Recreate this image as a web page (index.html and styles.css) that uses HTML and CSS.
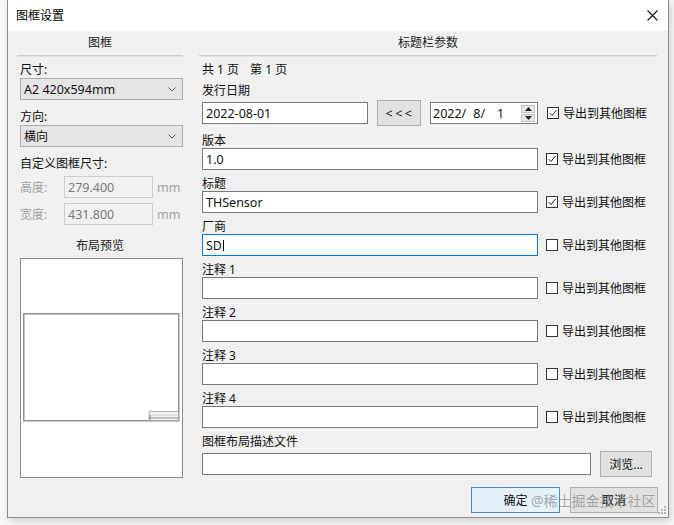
FILE: index.html
```html
<!DOCTYPE html>
<html lang="zh-CN">
<head>
<meta charset="utf-8">
<title>图框设置</title>
<link rel="stylesheet" href="styles.css">
</head>
<body>
<div class="window">
  <div class="titlebar">
    <span class="title">图框设置</span>
    <svg class="close" width="11" height="11" viewBox="0 0 11 11"><path d="M0.5 0.5L10.5 10.5M10.5 0.5L0.5 10.5" stroke="#111" stroke-width="1.1" fill="none"/></svg>
  </div>
  <div class="content">
    <div class="col-left">
      <div class="group-head">图框</div>
      <div class="lbl first">尺寸:</div>
      <div class="combo">
        <span class="latin">A2 420x594mm</span>
        <svg class="chev" width="8" height="5" viewBox="0 0 8 5"><path d="M0.5 0.5L4 4L7.5 0.5" stroke="#606060" fill="none"/></svg>
      </div>
      <div class="lbl gap11">方向:</div>
      <div class="combo">
        <span>横向</span>
        <svg class="chev" width="8" height="5" viewBox="0 0 8 5"><path d="M0.5 0.5L4 4L7.5 0.5" stroke="#606060" fill="none"/></svg>
      </div>
      <div class="lbl gap11">自定义图框尺寸:</div>
      <div class="dim-row">
        <span class="dim-lbl">高度:</span>
        <span class="dis-input latin">279.400</span>
        <span class="unit latin">mm</span>
      </div>
      <div class="dim-row">
        <span class="dim-lbl">宽度:</span>
        <span class="dis-input latin">431.800</span>
        <span class="unit latin">mm</span>
      </div>
      <div class="preview-title">布局预览</div>
      <div class="preview">
        <svg width="161" height="218" viewBox="0 0 161 218">
          <rect x="2.75" y="54.75" width="155" height="107" fill="#fff" stroke="#8f8f8f" stroke-width="1.5"/>
          <rect x="128" y="152.5" width="29.5" height="9" fill="#f2f2f2" stroke="#a0a0a0" stroke-width="0.8"/>
          <line x1="128" y1="156" x2="157.5" y2="156" stroke="#c8c8c8" stroke-width="0.8"/>
          <line x1="128" y1="159" x2="157.5" y2="159" stroke="#8c8c8c" stroke-width="1"/>
          <line x1="129" y1="156" x2="129" y2="161" stroke="#8c8c8c" stroke-width="1"/>
        </svg>
      </div>
    </div>
    <div class="col-right">
      <div class="group-head">标题栏参数</div>
      <div class="lbl first">共 1 页<span class="pg2">第 1 页</span></div>
      <div class="lbl gap8">发行日期</div>
      <div class="row tall">
        <div class="input date-input"><span class="latin">2022-08-01</span></div>
        <div class="btn btn-back"><span class="latin">&lt;&lt;&lt;</span></div>
        <div class="input spin">
          <span class="latin">2022/</span><span class="latin d2">8/</span><span class="latin d3">1</span>
          <span class="spin-btns">
            <span class="sb"><svg width="7" height="4" viewBox="0 0 7 4"><path d="M3.5 0L7 4H0Z" fill="#222"/></svg></span>
            <span class="sb"><svg width="7" height="4" viewBox="0 0 7 4"><path d="M0 0H7L3.5 4Z" fill="#222"/></svg></span>
          </span>
        </div>
        <span class="check on"><svg width="10" height="10" viewBox="0 0 10 10"><path d="M1.5 5L4 7.5L8.5 2" stroke="#222" stroke-width="1" fill="none"/></svg></span>
        <span class="check-lbl">导出到其他图框</span>
      </div>

      <div class="lbl gap9">版本</div>
      <div class="row">
        <div class="input wide"><span class="latin">1.0</span></div>
        <span class="check on"><svg width="10" height="10" viewBox="0 0 10 10"><path d="M1.5 5L4 7.5L8.5 2" stroke="#222" stroke-width="1" fill="none"/></svg></span>
        <span class="check-lbl">导出到其他图框</span>
      </div>

      <div class="lbl gap8">标题</div>
      <div class="row">
        <div class="input wide"><span class="latin">THSensor</span></div>
        <span class="check on"><svg width="10" height="10" viewBox="0 0 10 10"><path d="M1.5 5L4 7.5L8.5 2" stroke="#222" stroke-width="1" fill="none"/></svg></span>
        <span class="check-lbl">导出到其他图框</span>
      </div>

      <div class="lbl gap8">厂商</div>
      <div class="row">
        <div class="input wide focus"><span class="latin">SD</span><span class="caret"></span></div>
        <span class="check"></span>
        <span class="check-lbl">导出到其他图框</span>
      </div>

      <div class="lbl gap8">注释 1</div>
      <div class="row">
        <div class="input wide"></div>
        <span class="check"></span>
        <span class="check-lbl">导出到其他图框</span>
      </div>

      <div class="lbl gap8">注释 2</div>
      <div class="row">
        <div class="input wide"></div>
        <span class="check"></span>
        <span class="check-lbl">导出到其他图框</span>
      </div>

      <div class="lbl gap8">注释 3</div>
      <div class="row">
        <div class="input wide"></div>
        <span class="check"></span>
        <span class="check-lbl">导出到其他图框</span>
      </div>

      <div class="lbl gap8">注释 4</div>
      <div class="row">
        <div class="input wide"></div>
        <span class="check"></span>
        <span class="check-lbl">导出到其他图框</span>
      </div>

      <div class="lbl gap8">图框布局描述文件</div>
      <div class="row tall file-row">
        <div class="input file-input"></div>
        <div class="btn btn-browse">浏览...</div>
      </div>

      <div class="actions">
        <div class="btn btn-ok">确定</div>
        <div class="btn btn-cancel">取消</div>
      </div>
    </div>
  </div>
  <div class="watermark">@稀土掘金技术社区</div>
  <svg class="grip" width="8" height="8" viewBox="0 0 8 8">
    <rect x="6" y="0" width="2" height="2" fill="#b5b5b5"/>
    <rect x="3" y="3" width="2" height="2" fill="#b5b5b5"/>
    <rect x="6" y="3" width="2" height="2" fill="#b5b5b5"/>
    <rect x="0" y="6" width="2" height="2" fill="#b5b5b5"/>
    <rect x="3" y="6" width="2" height="2" fill="#b5b5b5"/>
    <rect x="6" y="6" width="2" height="2" fill="#b5b5b5"/>
  </svg>
</div>
</body>
</html>
```

FILE: styles.css
```css
* { box-sizing: border-box; }

html, body {
  margin: 0;
  padding: 0;
  background: #f7f7f7;
}

body {
  font-family: "Noto Sans", "Noto Sans CJK SC", sans-serif;
  font-size: 12px;
  color: #111;
  width: 674px;
  height: 525px;
  overflow: hidden;
}

.window {
  position: relative;
  margin-left: 7px;
  width: 662px;
  height: 518px;
  border: 1px solid #8e8e8e;
  border-top: none;
  background: #f0f0f0;
  box-shadow: 2px 3px 7px rgba(0, 0, 0, 0.16);
  display: flex;
  flex-direction: column;
}

.titlebar {
  height: 31px;
  flex: none;
  background: #fff;
  display: flex;
  align-items: center;
  padding-left: 8px;
}

.title {
  font-size: 12px;
  color: #000;
  line-height: 16px;
}

.close {
  margin-left: auto;
  margin-right: 10px;
}

.content {
  flex: 1;
  display: flex;
  padding-left: 9px;
}

.latin { font-size: 12.5px; }

.col-left {
  width: 166px;
  flex: none;
  display: flex;
  flex-direction: column;
}

.col-right {
  width: 458px;
  margin-left: 16px;
  flex: none;
  display: flex;
  flex-direction: column;
}

.group-head {
  height: 25px;
  line-height: 24px;
  text-align: center;
  color: #222;
  border-bottom: 1px solid #cdcdcd;
  box-shadow: 0 1px 0 #e2e2e2;
}

.lbl {
  height: 13px;
  line-height: 11px;
  padding-left: 3px;
  white-space: nowrap;
  color: #111;
}

.lbl.first { margin-top: 8px; }
.gap8 { margin-top: 8px; }
.gap9 { margin-top: 9px; }
.gap11 { margin-top: 11px; }

.pg2 { margin-left: 11px; }

/* left side */
.combo {
  margin-top: 1px;
  margin-left: 3px;
  width: 163px;
  height: 22px;
  background: #e5e5e5;
  border: 1px solid #adadad;
  display: flex;
  align-items: center;
  padding-left: 3px;
}

.chev {
  margin-left: auto;
  margin-right: 6px;
}

.dim-row {
  margin-top: 5px;
  height: 22px;
  display: flex;
  align-items: center;
  padding-left: 3px;
}

.dim-lbl {
  width: 44px;
  color: #a3a3a3;
}

.dis-input {
  width: 89px;
  height: 22px;
  border: 1px solid #cccccc;
  background: #f0f0f0;
  color: #7a7a7a;
  display: flex;
  align-items: center;
  padding-left: 3px;
}

.unit {
  margin-left: 4px;
  color: #a3a3a3;
}

.preview-title {
  margin-top: 14px;
  height: 13px;
  line-height: 13px;
  text-align: center;
  color: #222;
}

.preview {
  margin-top: 6px;
  margin-left: 3px;
  width: 163px;
  height: 220px;
  border: 1px solid #8c8c8c;
  background: #fff;
}

.preview svg { display: block; }

/* right side */
.row {
  height: 22px;
  display: flex;
  align-items: center;
  padding-left: 3px;
}

.row.tall {
  margin-top: 2px;
  height: 26px;
}

.input {
  height: 22px;
  border: 1px solid #7a7a7a;
  background: #fff;
  display: flex;
  align-items: center;
  padding-left: 3px;
  flex: none;
}

.input.focus { border-color: #0078d7; }

.caret {
  width: 1px;
  height: 11px;
  background: #000;
  margin-left: 1px;
}

.wide { width: 336px; }
.date-input { width: 166px; }

.spin {
  width: 108px;
  margin-left: 9px;
  padding-left: 2px;
  padding-right: 2px;
}

.d2 { margin-left: 7px; }
.d3 { margin-left: 12px; }

.spin-btns {
  margin-left: auto;
  display: flex;
  flex-direction: column;
  gap: 1px;
}

.sb {
  width: 14px;
  height: 8px;
  background: #e6e6e6;
  border: 1px solid #c4c4c4;
  display: flex;
  align-items: center;
  justify-content: center;
}

.sb svg { display: block; }

.btn {
  height: 26px;
  background: #e1e1e1;
  border: 1px solid #adadad;
  display: flex;
  align-items: center;
  justify-content: center;
  flex: none;
  color: #111;
}

.btn-back {
  width: 44px;
  margin-left: 9px;
  letter-spacing: 2.5px;
  padding-left: 2px;
}

.check {
  width: 12px;
  height: 12px;
  border: 1px solid #333;
  background: #fff;
  margin-left: 8px;
  flex: none;
  display: flex;
  align-items: center;
  justify-content: center;
}

.date-input ~ .check { margin-left: 9px; }

.check svg { display: block; }

.check-lbl {
  margin-left: 4px;
  white-space: nowrap;
}

.file-input { width: 389px; }

.btn-browse {
  width: 52px;
  margin-left: 9px;
}

.actions {
  margin-top: 10px;
  margin-right: -1px;
  display: flex;
  justify-content: flex-end;
  gap: 10px;
}

.btn-ok {
  width: 89px;
  background: #e5f1fb;
  border-color: #3b8ed6;
}

.btn-cancel {
  width: 88px;
}

.watermark {
  position: absolute;
  left: 523px;
  top: 492px;
  font-size: 14px;
  line-height: 18px;
  color: rgba(120, 120, 120, 0.62);
  white-space: nowrap;
}

.grip {
  position: absolute;
  right: 2px;
  bottom: 3px;
}
```
